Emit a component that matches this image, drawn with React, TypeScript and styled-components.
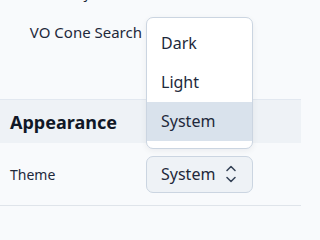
import styled, { createGlobalStyle } from "styled-components";

const themes = ["Dark", "Light", "System"];

const GlobalStyle = createGlobalStyle`
  html, body {
    margin: 0;
    padding: 0;
    background: #f8fafc;
    overflow: hidden;
  }
  body {
    font-family: "Noto Sans", "Open Sans", sans-serif;
    color: #1e293b;
  }
`;

const Page = styled.div`
  width: 301px;
  height: 215px;
  overflow: hidden;
`;

const Group = styled.div`
  margin-top: -28px;
  padding-bottom: 47px;
`;

const FieldRow = styled.div`
  display: grid;
  grid-template-columns: 142px 1fr;
  align-items: center;
  height: 40px;
`;

const FieldLabel = styled.span`
  justify-self: end;
  font-size: 15px;
  color: #1e293b;
  white-space: nowrap;
`;

const SectionHeader = styled.div`
  display: flex;
  align-items: center;
  height: 43px;
  padding-left: 10px;
  background: #eef2f6;
  border-top: 1px solid #e2e8f0;
  font-size: 18px;
  font-weight: 700;
  color: #111827;
`;

const SettingRow = styled.div`
  display: grid;
  grid-template-columns: 146px 107px;
  align-items: center;
  height: 62px;
  border-bottom: 1px solid #dfe4ea;
`;

const SettingLabel = styled.span`
  padding-left: 10px;
  font-size: 14px;
  color: #1e293b;
`;

const SelectWrap = styled.div`
  position: relative;
`;

const SelectButton = styled.button`
  display: flex;
  align-items: center;
  justify-content: space-between;
  box-sizing: border-box;
  width: 107px;
  height: 37px;
  padding: 0 16px 0 14px;
  background: #eef2f6;
  border: 1px solid #cbd5e1;
  border-radius: 7px;
  font-family: inherit;
  font-size: 16px;
  color: #1e293b;
`;

const Menu = styled.ul`
  position: absolute;
  left: 0;
  bottom: calc(100% + 7px);
  box-sizing: border-box;
  width: 107px;
  margin: 0;
  padding: 6px 0 7px;
  list-style: none;
  background: #ffffff;
  border: 1px solid #cbd5e1;
  border-radius: 7px;
  box-shadow: 0 2px 6px rgba(15, 23, 42, 0.06);
`;

const MenuItem = styled.li<{ $active?: boolean }>`
  display: flex;
  align-items: center;
  height: 39px;
  padding-left: 14px;
  font-size: 16px;
  color: #1e293b;
  background: ${(p) => (p.$active ? "#d9e2ec" : "transparent")};
`;

const UpDown = () => (
  <svg width="10" height="18" viewBox="0 0 10 18" fill="none" stroke="#334155" strokeWidth="1.5" strokeLinecap="round" strokeLinejoin="round">
    <path d="M1 5.5 5 1.5 9 5.5" />
    <path d="M1 12.5 5 16.5 9 12.5" />
  </svg>
);

export default function App() {
  return (
    <Page>
      <GlobalStyle />
      <Group>
        <FieldRow>
          <FieldLabel>Object Info</FieldLabel>
        </FieldRow>
        <FieldRow>
          <FieldLabel>VO Cone Search</FieldLabel>
        </FieldRow>
      </Group>
      <SectionHeader>Appearance</SectionHeader>
      <SettingRow>
        <SettingLabel>Theme</SettingLabel>
        <SelectWrap>
          <Menu>
            {themes.map((t) => (
              <MenuItem key={t} $active={t === "System"}>
                {t}
              </MenuItem>
            ))}
          </Menu>
          <SelectButton>
            System
            <UpDown />
          </SelectButton>
        </SelectWrap>
      </SettingRow>
    </Page>
  );
}
